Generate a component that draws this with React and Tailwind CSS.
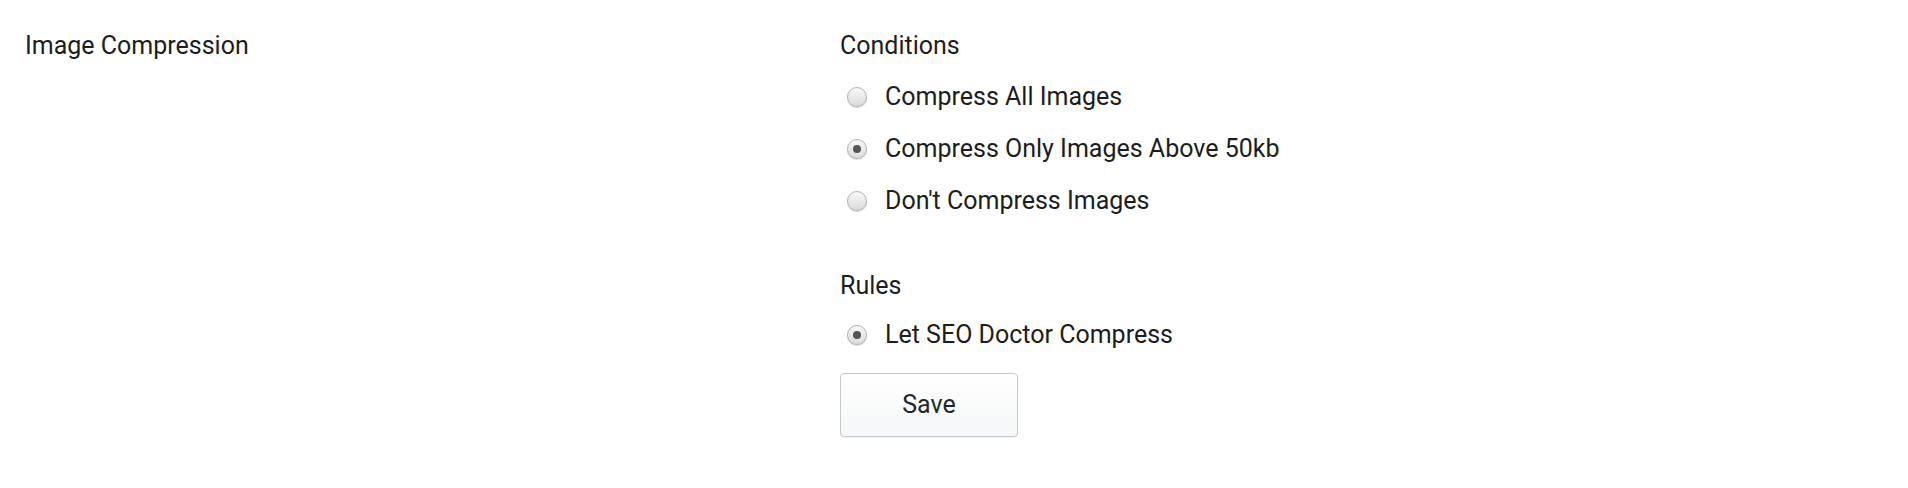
const Radio = ({ checked }) => {
  return (
    <span className="relative flex h-[20px] w-[20px] shrink-0 items-center justify-center rounded-full border border-[#b3b3b3] bg-gradient-to-b from-[#f7f7f7] to-[#dcdcdc] shadow-[0_1px_1px_rgba(0,0,0,0.18)]">
      {checked && <span className="h-[8px] w-[8px] rounded-full bg-[#555555]" />}
    </span>
  );
};

const Option = ({ label, checked }) => {
  return (
    <label className="flex h-[52px] items-center gap-[18px] pl-[7px]">
      <Radio checked={checked} />
      <span>{label}</span>
    </label>
  );
};

const App = () => {
  return (
    <div className="flex h-[488px] w-full bg-white pt-[32px] pl-[25px] text-[25px] leading-[28px] text-[#1d1d1d]" style={{ fontFamily: 'Roboto, "Liberation Sans", sans-serif' }}>
      <div className="w-[815px] shrink-0">Image Compression</div>
      <div className="flex flex-col">
        <div>Conditions</div>
        <div className="mt-[11px] flex flex-col">
          <Option label="Compress All Images" />
          <Option label="Compress Only Images Above 50kb" checked />
          <Option label="Don't Compress Images" />
        </div>
        <div className="mt-[45px]">Rules</div>
        <div className="mt-[9px]">
          <Option label="Let SEO Doctor Compress" checked />
        </div>
        <button className="mt-[12px] h-[64px] w-[178px] rounded-[4px] border border-[#c5cad0] bg-gradient-to-b from-white to-[#f5f7f8] text-[25px] text-[#1f2733] shadow-[0_1px_1px_rgba(0,0,0,0.05)]">
          Save
        </button>
      </div>
    </div>
  );
};

export default App;
